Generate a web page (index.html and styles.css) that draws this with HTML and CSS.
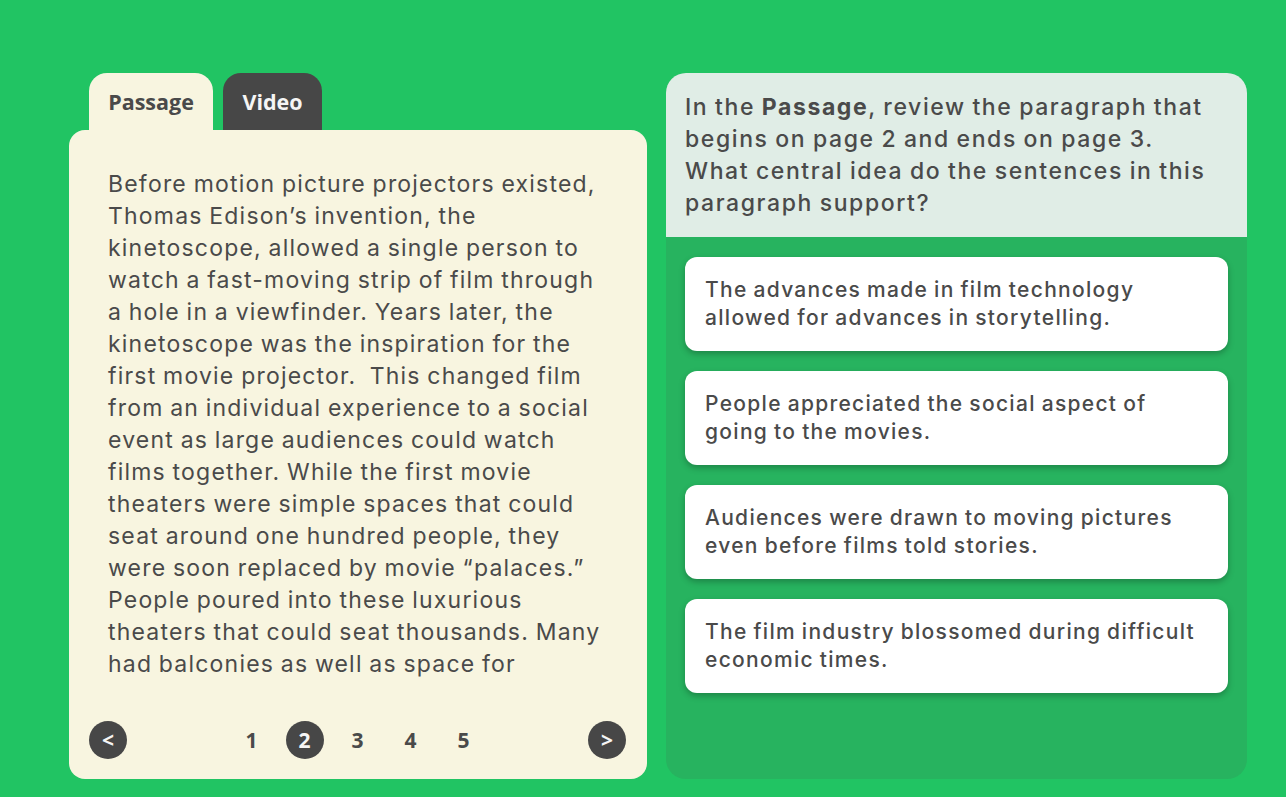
FILE: index.html
```html
<!DOCTYPE html>
<html lang="en">
<head>
<meta charset="utf-8">
<title>Passage Question</title>
<link rel="stylesheet" href="styles.css">
</head>
<body>
<main class="page">
  <section class="reader">
    <div class="tabs">
      <button class="tab tab-active">Passage</button>
      <button class="tab tab-dark">Video</button>
    </div>
    <div class="panel">
      <p class="passage">Before motion picture projectors existed,<br>Thomas Edison’s invention, the<br>kinetoscope, allowed a single person to<br>watch a fast-moving strip of film through<br>a hole in a viewfinder. Years later, the<br>kinetoscope was the inspiration for the<br>first movie projector.&nbsp; This changed film<br>from an individual experience to a social<br>event as large audiences could watch<br>films together. While the first movie<br>theaters were simple spaces that could<br>seat around one hundred people, they<br>were soon replaced by movie “palaces.”<br>People poured into these luxurious<br>theaters that could seat thousands. Many<br>had balconies as well as space for</p>
      <nav class="pager">
        <button class="pg-btn">&lt;</button>
        <div class="pages">
          <span class="pg">1</span>
          <span class="pg pg-current">2</span>
          <span class="pg">3</span>
          <span class="pg">4</span>
          <span class="pg">5</span>
        </div>
        <button class="pg-btn">&gt;</button>
      </nav>
    </div>
  </section>
  <section class="quiz">
    <div class="question">In the <strong>Passage</strong>, review the paragraph that<br>begins on page 2 and ends on page 3.<br>What central idea do the sentences in this<br>paragraph support?</div>
    <div class="answers">
      <div class="answer">The advances made in film technology<br>allowed for advances in storytelling.</div>
      <div class="answer">People appreciated the social aspect of<br>going to the movies.</div>
      <div class="answer">Audiences were drawn to moving pictures<br>even before films told stories.</div>
      <div class="answer">The film industry blossomed during difficult<br>economic times.</div>
    </div>
  </section>
</main>
</body>
</html>
```

FILE: styles.css
```css
* { box-sizing: border-box; }
html, body { margin: 0; padding: 0; }
body {
  background: #21c463;
  width: 1286px;
  height: 797px;
  overflow: hidden;
  font-family: Inter, "Noto Sans", sans-serif;
  color: #4a4a4a;
}
.page {
  display: flex;
  gap: 19px;
  padding: 73px 39px 18px 69px;
  height: 797px;
}
.reader {
  width: 578px;
  display: flex;
  flex-direction: column;
}
.tabs {
  display: flex;
  gap: 10px;
  padding-left: 20px;
  height: 57px;
}
.tab {
  border: none;
  font-family: "Open Sans", sans-serif;
  font-weight: 700;
  font-size: 21.5px;
  padding: 0;
  border-radius: 18px 18px 0 0;
  height: 57px;
  line-height: 58px;
  text-align: center;
}
.tab-active { background: #f8f5e0; color: #4a4a4a; width: 124px; }
.tab-dark { background: #474747; color: #f5f5f5; width: 99px; }
.panel {
  flex: 1;
  background: #f8f5e0;
  border-radius: 16px;
  padding: 38px 20px 20px 39px;
  display: flex;
  flex-direction: column;
  justify-content: space-between;
}
.passage {
  margin: 0;
  font-size: 23px;
  line-height: 32px;
  font-weight: 400;
  letter-spacing: 1.2px;
  word-spacing: -1px;
  white-space: nowrap;
  color: #4a4a4a;
}
.pager {
  display: flex;
  align-items: center;
  justify-content: space-between;
  margin-left: -19px;
  margin-right: 1px;
}
.pg-btn {
  width: 38px;
  height: 38px;
  border-radius: 50%;
  border: none;
  background: #474747;
  color: #f5f5f5;
  font-family: "Open Sans", sans-serif;
  font-weight: 700;
  font-size: 21px;
  padding: 0;
  display: flex;
  align-items: center;
  justify-content: center;
}
.pages {
  display: flex;
  gap: 15px;
}
.pg {
  width: 38px;
  height: 38px;
  border-radius: 50%;
  display: flex;
  align-items: center;
  justify-content: center;
  font-family: "Open Sans", sans-serif;
  font-weight: 700;
  font-size: 21px;
  color: #4a4a4a;
}
.pg-current { background: #474747; color: #f5f5f5; }
.quiz {
  width: 581px;
  background: #27b35f;
  border-radius: 20px;
  overflow: hidden;
  display: flex;
  flex-direction: column;
  height: 706px;
}
.question {
  background: #e0ede6;
  padding: 18px 19px;
  font-size: 23px;
  line-height: 32px;
  font-weight: 500;
  letter-spacing: 1.6px;
  word-spacing: -1px;
  white-space: nowrap;
  height: 164px;
}
.question strong { font-weight: 700; }
.answers {
  display: flex;
  flex-direction: column;
  gap: 20px;
  padding: 20px 19px;
}
.answer {
  background: #ffffff;
  border-radius: 12px;
  box-shadow: 0 3px 6px rgba(0,0,0,0.25);
  padding: 19px 20px 17px;
  height: 94px;
  font-size: 21px;
  line-height: 28px;
  font-weight: 500;
  letter-spacing: 1.3px;
  word-spacing: -1px;
  white-space: nowrap;
  color: #4a4a4a;
}
```
